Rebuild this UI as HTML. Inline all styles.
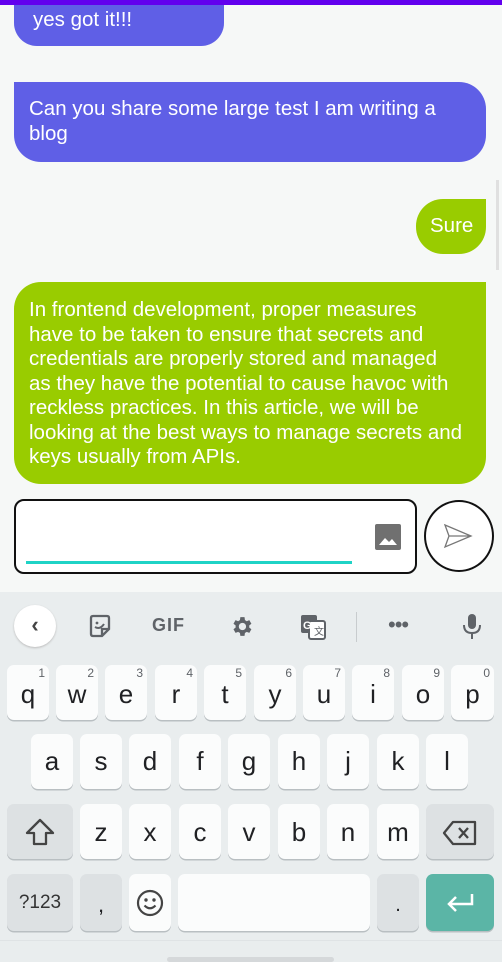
<!DOCTYPE html>
<html><head><meta charset="utf-8"><style>
*{margin:0;padding:0;box-sizing:border-box}
body{width:502px;height:962px;overflow:hidden;background:#f6f8f7;font-family:"Liberation Sans",sans-serif;position:relative}
.b{position:absolute;color:#fff;font-size:20.5px;line-height:24.5px;white-space:nowrap}
.p{background:#5f5fe6}
.g{background:#99cc00}
.kb{position:absolute;left:0;top:592px;width:502px;height:370px;background:#e9edee}
.k{position:absolute;background:#fbfcfc;border-radius:7px;box-shadow:0 1.5px 0 #b9bfc2;color:#202124;font-size:26px;text-align:center}
.d{background:#dde1e3}
.k sup{position:absolute;right:4px;top:2px;font-size:12px;color:#5f6368;line-height:12px}
</style></head><body>
<div style="position:absolute;left:0;top:0;width:502px;height:5px;background:#6200ee;z-index:2"></div>
<div class="b p" style="left:14px;top:-20px;width:210px;height:66px;border-radius:0 0 23px 23px;padding:28px 0 0 19px">yes got it!!!</div>
<div class="b p" style="left:14px;top:82px;width:472px;height:80px;border-radius:0 27px 27px 27px;padding:15px 0 0 15px">Can you share some large test I am writing a<br>blog</div>
<div class="b g" style="left:416px;top:199px;width:70px;height:55px;border-radius:27px 0 27px 27px;padding:15px 0 0 14px">Sure</div>
<div class="b g" style="left:14px;top:282px;width:472px;height:202px;border-radius:27px 0 27px 27px;padding:16px 10px 0 15px">In frontend development, proper measures<br>have to be taken to ensure that secrets and<br>credentials are properly stored and managed<br>as they have the potential to cause havoc with<br>reckless practices. In this article, we will be<br>looking at the best ways to manage secrets and<br>keys usually from APIs.</div>
<div style="position:absolute;left:496px;top:180px;width:3px;height:90px;background:#e0e0e0"></div>
<div style="position:absolute;left:14px;top:499px;width:403px;height:75px;border:2px solid #111;border-radius:10px;background:#fff"></div>
<div style="position:absolute;left:26px;top:561px;width:326px;height:3px;background:#1fd3c6"></div>
<svg style="position:absolute;left:375px;top:524px" width="26" height="26" viewBox="0 0 26 26"><rect width="26" height="26" rx="2" fill="#707070"/><path d="M4 21 L10 14 L14 18 L17 15 L22 21Z" fill="#fff"/></svg>
<div style="position:absolute;left:424px;top:500px;width:70px;height:72px;border:2px solid #111;border-radius:50%;background:#fff"></div>
<svg style="position:absolute;left:443px;top:522px" width="30" height="28" viewBox="0 0 30 28"><path d="M2 3 L28 14 L2 25 L6 14 Z M6 14 L28 14" fill="none" stroke="#777" stroke-width="1.3"/></svg>
<div class="kb">
<div style="position:absolute;left:14px;top:13px;width:42px;height:42px;border-radius:50%;background:#fff;box-shadow:0 1px 2px #bbb;color:#444;font-size:22px;text-align:center;line-height:40px;font-weight:bold">‹</div>
<svg style="position:absolute;left:88px;top:22px" width="24" height="24" viewBox="0 0 24 24"><path d="M3 4 Q3 2 5 2 H19 Q21 2 21 4 V15 L14 22 H5 Q3 22 3 20Z M14 22 V15 H21" fill="none" stroke="#5f6368" stroke-width="2.3"/><circle cx="9" cy="9" r="1.4" fill="#5f6368"/><path d="M7 13 Q12 16 16 10" fill="none" stroke="#5f6368" stroke-width="2"/></svg>
<div style="position:absolute;left:152px;top:23px;font-size:18px;font-weight:bold;color:#5f6368;letter-spacing:1px">GIF</div>
<svg style="position:absolute;left:229px;top:22px" width="25" height="25" viewBox="0 0 24 24"><path fill="#5f6368" d="M19.4 13a7.5 7.5 0 0 0 0-2l2.1-1.6-2-3.5-2.5 1a7 7 0 0 0-1.7-1L14.9 3h-4l-.4 2.9a7 7 0 0 0-1.7 1l-2.5-1-2 3.5L6.4 11a7.5 7.5 0 0 0 0 2l-2.1 1.6 2 3.5 2.5-1a7 7 0 0 0 1.7 1l.4 2.9h4l.4-2.9a7 7 0 0 0 1.7-1l2.5 1 2-3.5zM12.9 15.5a3.5 3.5 0 1 1 0-7 3.5 3.5 0 0 1 0 7z"/></svg>
<svg style="position:absolute;left:300px;top:22px" width="26" height="26" viewBox="0 0 26 26"><rect x="1" y="1" width="16" height="18" rx="2" fill="#5f6368"/><rect x="9" y="7" width="16" height="18" rx="2" fill="#fff" stroke="#5f6368" stroke-width="2"/><text x="3" y="15" font-size="11" font-weight="bold" fill="#fff" font-family="Liberation Sans">G</text><text x="14" y="21" font-size="10" fill="#5f6368" font-family="Liberation Sans">文</text></svg>
<div style="position:absolute;left:356px;top:20px;width:1px;height:30px;background:#c8ccce"></div>
<div style="position:absolute;left:388px;top:20px;font-size:22px;color:#5f6368;letter-spacing:-1px">•••</div>
<svg style="position:absolute;left:461px;top:20px" width="22" height="28" viewBox="0 0 22 28"><rect x="7" y="2" width="8" height="15" rx="4" fill="#5f6368"/><path d="M3 13 Q3 21 11 21 Q19 21 19 13 M11 21 V27" fill="none" stroke="#5f6368" stroke-width="2"/></svg>
</div>
<!-- row1 -->
<div class="k" style="left:7px;top:665px;width:42px;height:55px;line-height:58px">q<sup>1</sup></div>
<div class="k" style="left:56px;top:665px;width:42px;height:55px;line-height:58px">w<sup>2</sup></div>
<div class="k" style="left:105px;top:665px;width:42px;height:55px;line-height:58px">e<sup>3</sup></div>
<div class="k" style="left:155px;top:665px;width:42px;height:55px;line-height:58px">r<sup>4</sup></div>
<div class="k" style="left:204px;top:665px;width:42px;height:55px;line-height:58px">t<sup>5</sup></div>
<div class="k" style="left:254px;top:665px;width:42px;height:55px;line-height:58px">y<sup>6</sup></div>
<div class="k" style="left:303px;top:665px;width:42px;height:55px;line-height:58px">u<sup>7</sup></div>
<div class="k" style="left:352px;top:665px;width:42px;height:55px;line-height:58px">i<sup>8</sup></div>
<div class="k" style="left:402px;top:665px;width:42px;height:55px;line-height:58px">o<sup>9</sup></div>
<div class="k" style="left:451px;top:665px;width:43px;height:55px;line-height:58px">p<sup>0</sup></div>
<!-- row2 -->
<div class="k" style="left:31px;top:734px;width:42px;height:55px;line-height:54px">a</div>
<div class="k" style="left:80px;top:734px;width:42px;height:55px;line-height:54px">s</div>
<div class="k" style="left:129px;top:734px;width:42px;height:55px;line-height:54px">d</div>
<div class="k" style="left:179px;top:734px;width:42px;height:55px;line-height:54px">f</div>
<div class="k" style="left:228px;top:734px;width:42px;height:55px;line-height:54px">g</div>
<div class="k" style="left:278px;top:734px;width:42px;height:55px;line-height:54px">h</div>
<div class="k" style="left:327px;top:734px;width:42px;height:55px;line-height:54px">j</div>
<div class="k" style="left:377px;top:734px;width:42px;height:55px;line-height:54px">k</div>
<div class="k" style="left:426px;top:734px;width:42px;height:55px;line-height:54px">l</div>
<!-- row3 -->
<div class="k d" style="left:7px;top:804px;width:66px;height:55px"><svg style="margin-top:14px" width="30" height="28" viewBox="0 0 30 28"><path d="M15 2 L28 15 H21 V26 H9 V15 H2Z" fill="none" stroke="#444" stroke-width="2.3" stroke-linejoin="round"/></svg></div>
<div class="k" style="left:80px;top:804px;width:42px;height:55px;line-height:56px">z</div>
<div class="k" style="left:129px;top:804px;width:42px;height:55px;line-height:56px">x</div>
<div class="k" style="left:179px;top:804px;width:42px;height:55px;line-height:56px">c</div>
<div class="k" style="left:228px;top:804px;width:42px;height:55px;line-height:56px">v</div>
<div class="k" style="left:278px;top:804px;width:42px;height:55px;line-height:56px">b</div>
<div class="k" style="left:327px;top:804px;width:42px;height:55px;line-height:56px">n</div>
<div class="k" style="left:377px;top:804px;width:42px;height:55px;line-height:56px">m</div>
<div class="k d" style="left:426px;top:804px;width:68px;height:55px"><svg style="margin-top:16px" width="36" height="26" viewBox="0 0 36 26"><path d="M11 2 H33 V24 H11 L2 13Z" fill="none" stroke="#444" stroke-width="2.3" stroke-linejoin="round"/><path d="M17 8 L26 18 M26 8 L17 18" stroke="#444" stroke-width="2.3"/></svg></div>
<!-- row4 -->
<div class="k d" style="left:7px;top:874px;width:66px;height:57px;font-size:19px;line-height:58px;color:#333">?123</div>
<div class="k d" style="left:80px;top:874px;width:42px;height:57px;line-height:62px;font-size:22px">,</div>
<div class="k" style="left:129px;top:874px;width:42px;height:57px"><svg style="margin-top:15px" width="28" height="28" viewBox="0 0 28 28"><circle cx="14" cy="14" r="12" fill="none" stroke="#444" stroke-width="2.2"/><circle cx="10" cy="11" r="1.7" fill="#444"/><circle cx="18" cy="11" r="1.7" fill="#444"/><path d="M8.5 16.5 Q14 22 19.5 16.5" fill="none" stroke="#444" stroke-width="2.2"/></svg></div>
<div class="k" style="left:178px;top:874px;width:192px;height:57px"></div>
<div class="k d" style="left:377px;top:874px;width:42px;height:57px;line-height:62px;font-size:20px">.</div>
<div class="k" style="left:426px;top:874px;width:68px;height:57px;background:#5bb5a6"><svg style="margin-top:18px" width="30" height="22" viewBox="0 0 30 22"><path d="M27 2 V12 H4 M11 5 L4 12 L11 19" fill="none" stroke="#fff" stroke-width="2.5"/></svg></div>
<div style="position:absolute;left:0;top:940px;width:502px;height:1px;background:#dfe3e5"></div>
<div style="position:absolute;left:167px;top:957px;width:167px;height:5px;background:#d5d8da;border-radius:3px"></div>
</body></html>
